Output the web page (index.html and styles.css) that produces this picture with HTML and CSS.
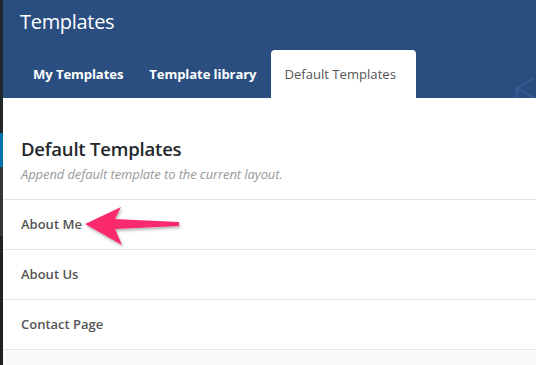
FILE: index.html
```html
<!DOCTYPE html>
<html>
<head>
<meta charset="utf-8">
<link rel="stylesheet" href="styles.css">
</head>
<body>
<div class="page">
  <div class="sidebar">
    <div class="sb-dark"></div>
    <div class="sb-blue"></div>
    <div class="sb-gray"></div>
    <div class="sb-dark2"></div>
  </div>
  <div class="main">
    <header class="header">
      <h1 class="title">Templates</h1>
      <nav class="tabs">
        <span class="tab">My Templates</span>
        <span class="tab">Template library</span>
        <span class="tab active">Default Templates</span>
      </nav>
      <svg class="watermark" width="24" height="22" viewBox="0 0 24 22"><path d="M22 2 L5 12 L22 22 M5 12 L5 22" fill="none" stroke="#3d6297" stroke-width="2"/></svg>
    </header>
    <section class="content">
      <h2 class="heading">Default Templates</h2>
      <p class="desc">Append default template to the current layout.</p>
      <ul class="list">
        <li class="item">About Me</li>
        <li class="item">About Us</li>
        <li class="item">Contact Page</li>
      </ul>
      <div class="footer"></div>
    </section>
    <svg class="arrow" width="110" height="50" viewBox="0 0 110 50">
      <defs>
        <filter id="sh" x="-20%" y="-20%" width="140%" height="150%">
          <feDropShadow dx="1" dy="2" stdDeviation="1.5" flood-color="#000" flood-opacity="0.3"/>
        </filter>
      </defs>
      <path d="M2 21 L38 4 L32 16 L96 19 L96 23 L32 26 L39 42 Z" fill="#fb2c6c" filter="url(#sh)"/>
    </svg>
  </div>
</div>
</body>
</html>
```

FILE: styles.css
```css
* { box-sizing: border-box; margin: 0; padding: 0; }
html, body { width: 536px; height: 365px; overflow: hidden; background: #fff; }
body { font-family: "Open Sans", "Noto Sans", sans-serif; }
.page { display: flex; height: 365px; }
.sidebar { width: 3px; display: flex; flex-direction: column; flex: none; }
.sb-dark { height: 133px; background: #23282d; }
.sb-blue { height: 34px; background: #0073aa; }
.sb-gray { height: 69px; background: #32373c; }
.sb-dark2 { flex: 1; background: #1e2226; }
.main { flex: 1; position: relative; display: flex; flex-direction: column; }
.header { background: #2a4e7f; height: 98px; padding: 8px 0 0 17px; position: relative; display: flex; flex-direction: column; justify-content: space-between; }
.title { color: #fff; font-weight: 400; font-size: 20px; line-height: 28px; letter-spacing: -0.3px; }
.tabs { display: flex; align-items: flex-end; }
.tab { color: #fff; font-weight: 700; font-size: 13.1px; line-height: 16px; padding: 16px 13px; letter-spacing: -0.1px; }
.tab.active { background: #fff; color: #555; font-weight: 400; border-radius: 4px 4px 0 0; width: 145px; height: 48px; margin-left: 2px; letter-spacing: 0; }
.watermark { position: absolute; right: 0; bottom: 0; opacity: 0.7; }
.content { flex: 1; display: flex; flex-direction: column; }
.heading { font-size: 18.5px; font-weight: 600; color: #23282d; padding: 38px 0 0 18px; line-height: 26px; letter-spacing: -0.2px; }
.desc { font-style: italic; font-size: 13px; color: #999; padding: 4px 0 0 18px; line-height: 16px; height: 38px; border-bottom: 1px solid #e5e5e5; letter-spacing: -0.1px; }
.list { list-style: none; }
.item { height: 50px; border-bottom: 1px solid #e5e5e5; padding: 16px 0 0 18px; font-size: 13px; font-weight: 600; color: #555; line-height: 17px; }
.footer { flex: 1; background: #fafafa; }
.arrow { position: absolute; left: 80px; top: 203px; }
```
